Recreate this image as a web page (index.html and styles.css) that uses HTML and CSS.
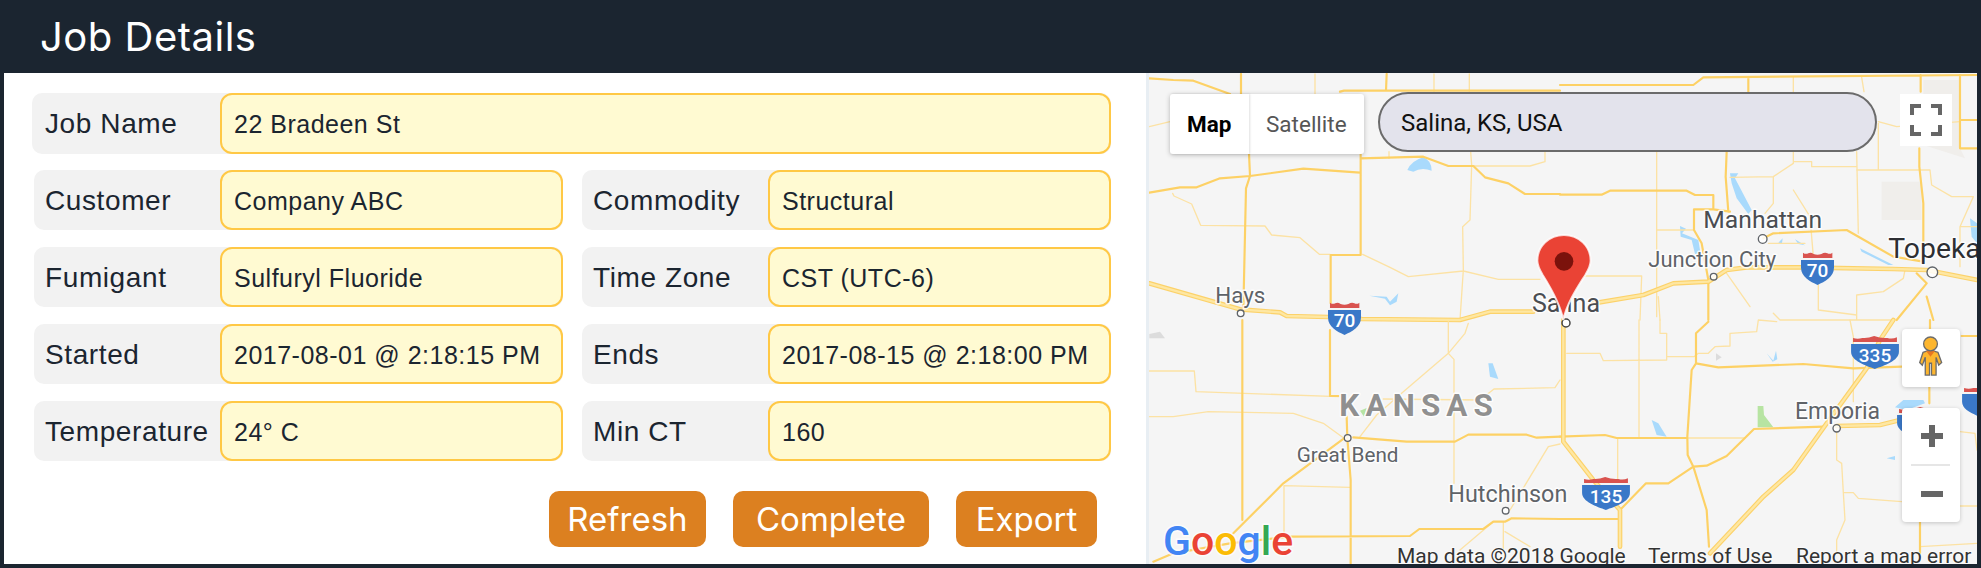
FILE: index.html
```html
<!DOCTYPE html>
<html lang="en">
<head>
<meta charset="utf-8">
<title>Job Details</title>
<link rel="stylesheet" href="styles.css">
</head>
<body>
<div class="app">
  <header class="topbar"><h1 class="title">Job Details</h1></header>
  <main class="content">
    <section class="panel">
      <div class="field field-wide"><span class="label">Job Name</span><span class="value">22 Bradeen St</span></div>
      <div class="grid">
        <div class="field"><span class="label">Customer</span><span class="value">Company ABC</span></div>
        <div class="field"><span class="label">Commodity</span><span class="value">Structural</span></div>
        <div class="field"><span class="label">Fumigant</span><span class="value">Sulfuryl Fluoride</span></div>
        <div class="field"><span class="label">Time Zone</span><span class="value">CST (UTC-6)</span></div>
        <div class="field"><span class="label">Started</span><span class="value">2017-08-01 @ 2:18:15 PM</span></div>
        <div class="field"><span class="label">Ends</span><span class="value">2017-08-15 @ 2:18:00 PM</span></div>
        <div class="field"><span class="label">Temperature</span><span class="value">24° C</span></div>
        <div class="field"><span class="label">Min CT</span><span class="value">160</span></div>
      </div>
      <div class="actions">
        <button class="btn">Refresh</button>
        <button class="btn">Complete</button>
        <button class="btn">Export</button>
      </div>
    </section>
    <section class="map">
      <svg class="map-canvas" viewBox="1149 73 828 491" xmlns="http://www.w3.org/2000/svg">
        <defs>
          <symbol id="sh2" viewBox="0 0 100 100">
            <path class="sh-red" d="M6 18 L6 2 Q14 8 22 4 Q30 0 38 6 Q50 10 62 6 Q72 0 80 4 Q88 8 95 2 L95 18 Z"/>
            <path class="sh-blue" d="M0 24 H100 V48 C100 76 72 90 50 100 C28 90 0 76 0 48 Z"/>
          </symbol>
          <symbol id="sh3" viewBox="0 0 145 100">
            <path class="sh-red" d="M6 18 L6 6 Q20 10 34 6 Q50 8 70 0 Q90 8 110 6 Q125 10 139 4 L139 18 Z"/>
            <path class="sh-blue" d="M0 24 H145 V48 C145 76 100 90 72 100 C45 90 0 76 0 48 Z"/>
          </symbol>
        </defs>
        <rect class="land" x="1149" y="73" width="828" height="491"/>

        <!-- north-west quarter -->
        <g transform="translate(1140 70) scale(.33333)">
          <path class="wet" d="M802 300 Q815 272 850 262 Q875 272 875 302 Q845 290 820 305 Z"/>
          <path class="wet" d="M688 677 L740 680 L750 695 L775 670 L770 695 L750 706 L735 686 Z"/>
          <path class="lo" d="M525 12 V72 M882 12 V65 M988 12 V65 M747 245 V265 M992 245 L995 285 L990 450 L968 470 L970 600 L960 750 M1000 288 L1170 288 L1215 275 V245 M98 370 L102 378 L155 402 L182 466 L375 468 L395 495 L480 503 L538 553 H570 M668 553 L750 592 L805 620 L970 603 L1075 628 L1200 628 M28 170 L90 155"/>
          <path class="md" d="M28 25 L100 30 L160 32 L270 72 M303 12 V72 M327 250 L330 318 L318 355 L310 720 M28 368 L120 352 L170 352 L240 325 L330 318 L490 296 L660 308 M662 252 V555 H572 V700 M662 265 L850 260 L925 288 H1000 L1035 322 L1105 340 L1155 372 H1260 M600 65 L612 62 H1260 M740 12 L738 62"/>
          <path class="hw-o" d="M28 640 L300 718 L420 727 L440 738 L565 741 L666 747 L960 750 L1050 725 L1180 725"/>
          <path class="hw-i" d="M28 640 L300 718 L420 727 L440 738 L565 741 L666 747 L960 750 L1050 725 L1180 725"/>
          <circle class="town" cx="302" cy="730" r="10"/>
          <text class="place" x="226" y="700" font-size="67">Hays</text>
        </g>

        <!-- north-east quarter -->
        <g transform="translate(1560 70) scale(.33333)">
          <path class="park" d="M1090 30 H1200 V235 L1215 265 L1090 225 Z"/>
          <path class="park" d="M965 335 H1085 V450 H965 Z"/>
          <path class="wet" d="M510 310 L535 310 L525 325 L575 420 L565 432 L530 385 L515 340 Z"/>
          <path class="wet" d="M360 468 L378 476 L366 490 L415 510 L422 552 L405 552 L395 510 L362 500 Z"/>
          <path class="wet" d="M655 518 L668 505 L666 520 Z M705 508 L735 526 L715 522 Z"/>
          <path class="wet" d="M900 535 L1000 585 L985 585 L905 545 Z M1230 445 L1251 460 V520 L1235 500 Z"/>
          <path class="lo" d="M290 245 V740 M290 480 H400 M700 22 V280 M700 275 H755 V290 H890 M890 245 L895 490 M905 22 L912 65 M955 160 V300 M955 155 L1010 170 L1200 155 M890 300 H1110 L1115 345 L1175 380 H1240 L1200 470 V590 M700 280 L640 320 L510 322 M640 320 V400 L615 430 M700 360 L750 440 L760 560 M1200 470 H1251 M0 618 H245 L240 750 M295 680 L300 750 M500 610 L570 710 M775 640 V720 L890 735 M890 750 V675 L970 665 L1030 625 L1035 600 M640 730 L660 750 H1000 M625 520 H735"/>
          <path class="md" d="M0 45 H400 L430 22 L1251 15 M565 22 V65 M1082 15 V65 M1200 15 V235 H1251 M1200 150 H1251 M0 374 H125 L150 362 H380 L405 375 H460 V418 H402 V480 L425 520 L445 630 V750 M460 418 L510 425 M500 245 L497 320 L505 425 M610 505 L640 490 L860 480 L1000 560 L1090 575 M1078 235 V290 L1090 400 V580 M1100 640 L1010 750 M1070 610 L1100 640 M1100 680 L1120 750"/>
          <path class="hw-o" d="M100 700 L250 675 L340 640 L445 635 L500 600 L560 592 H720 L1000 597 L1100 600 L1251 630"/>
          <path class="hw-i" d="M100 700 L250 675 L340 640 L445 635 L500 600 L560 592 H720 L1000 597 L1100 600 L1251 630"/>
          <circle class="town" cx="608" cy="507" r="13"/>
          <circle class="town" cx="461" cy="620" r="10"/>
          <circle class="town" cx="1117" cy="607" r="16"/>
          <text class="place place-dark" x="430" y="475" font-size="74">Manhattan</text>
          <text class="place" x="265" y="590" font-size="66">Junction City</text>
          <text class="place place-black" x="985" y="565" font-size="85">Topeka</text>
        </g>

        <!-- south-west quarter -->
        <g transform="translate(1140 320) scale(.33333)">
          <path class="dim" d="M28 42 L60 35 L75 55 H28 Z"/>
          <path class="wet" d="M1045 130 L1058 130 L1075 177 L1050 170 Z"/>
          <path class="grn" d="M660 272 L680 264 L672 290 Z"/>
          <path class="lo" d="M925 5 V100 L975 40 L985 10 M925 100 L790 215 L710 285 L660 350 M925 100 L942 118 V490 M28 153 H163 L168 215 L595 230 M730 237 L1020 240 L1062 207 L1245 203 L1260 180 M28 290 H100 L205 275 L460 280 L550 310 L612 355 M432 497 L630 502 M432 497 V640 M1225 380 L1260 372 M1225 380 L1110 570 M1060 605 L960 690 M1090 605 V690 M1095 635 L1170 680"/>
          <path class="md" d="M307 0 V600 M570 30 V228 H595 M612 355 L430 490 L280 640 M620 290 L622 355 L632 480 V730 M640 352 L800 365 H945 L985 344 H1160 L1190 353 L1260 350 M40 725 L100 700 L270 670 L450 650 L810 648 L838 627 H1030 L1060 605 H1095 L1115 595 L1260 597"/>
          <circle class="town" cx="623" cy="354" r="10"/>
          <circle class="town" cx="1097" cy="572" r="10"/>
          <text class="place" x="470" y="425" font-size="62">Great Bend</text>
          <text class="place" x="925" y="545" font-size="70">Hutchinson</text>
          <text class="state" x="598" y="288" font-size="94">KANSAS</text>
        </g>

        <!-- south-east quarter -->
        <g transform="translate(1560 320) scale(.33333)">
          <path class="wet" d="M275 300 L295 310 L320 350 L290 345 Z M620 100 L640 122 L648 92 L652 118 L638 125 Z M980 415 L1005 408 L1005 420 Z M1030 240 L1090 240 L1095 250 L1040 270 L1005 262 Z"/>
          <path class="dim" d="M468 100 L485 112 L468 122 Z"/>
          <path class="grn" d="M593 258 H610 L612 285 L640 322 H593 Z"/>
          <path class="lo" d="M237 0 V350 M300 0 V40 H320 V120 L130 122 L120 100 H20 M320 110 H402 L415 100 H445 L465 80 L510 78 V40 L590 35 L595 0 L650 5 M870 0 L880 50 V245 M385 354 H555 M173 354 V480 M830 335 V420 L845 430 L850 518 H880 L895 535 L1025 545 M850 518 L855 600 L830 660 V700 M1200 335 L1245 340 L1251 390 M1080 558 H1251 M1080 680 L1251 670"/>
          <path class="md" d="M445 5 L408 40 V130 L395 150 L382 350 L383 405 L400 440 L440 570 L447 680 M408 130 L475 142 L730 132 L880 145 L1025 140 M0 350 L135 345 L170 354 H380 M400 440 L440 437 L500 408 L582 327 L790 320 M400 440 L325 490 H258 L180 570 M0 597 H175 M1110 0 V30 M1108 200 V250 M1080 600 V700 M1205 48 H1251"/>
          <path class="hw-o" d="M10 0 V365 L100 480 L180 570 V680 M1000 0 L960 60 L920 145 L800 310 L700 450 L610 530 L450 700 M830 318 L960 315 L1020 300"/>
          <path class="hw-i" d="M10 0 V365 L100 480 L180 570 V680 M1000 0 L960 60 L920 145 L800 310 L700 450 L610 530 L450 700 M830 318 L960 315 L1020 300"/>
          <circle class="town" cx="830" cy="325" r="11"/>
          <text class="place" x="705" y="297" font-size="69">Emporia</text>
        </g>

        <!-- interstate shields -->
        <use href="#sh2" x="1328" y="302" width="33" height="33"/>
        <use href="#sh2" x="1801" y="252" width="33" height="33"/>
        <use href="#sh3" x="1582" y="477" width="48" height="33"/>
        <use href="#sh3" x="1851" y="336" width="48" height="33"/>
        <use href="#sh3" x="1897" y="407" width="48" height="33"/>
        <use href="#sh3" x="1962" y="386" width="48" height="33"/>
        <text class="shield" x="1344.5" y="327" font-size="19">70</text>
        <text class="shield" x="1817.5" y="277" font-size="19">70</text>
        <text class="shield" x="1606" y="502.5" font-size="19">135</text>
        <text class="shield" x="1875" y="361.5" font-size="19">335</text>

        <!-- Salina and the pin -->
        <circle class="town-page" cx="1566" cy="323" r="4"/>
        <text class="place-page" x="1532" y="312" font-size="25">Salina</text>
        <g transform="translate(1500 220) scale(.33333)">
          <path class="pin" d="M190 300 C180 250 150 200 128 165 C118 148 112 135 112 122 C112 78 148 45 192 45 C236 45 272 78 272 122 C272 135 266 148 256 165 C234 200 200 250 190 300 Z"/>
          <circle class="pin-dot" cx="192" cy="124" r="28"/>
        </g>

        <text class="logo" x="1163" y="555" font-size="41"><tspan class="g-b">G</tspan><tspan class="g-r">o</tspan><tspan class="g-y">o</tspan><tspan class="g-b">g</tspan><tspan class="g-g">l</tspan><tspan class="g-r">e</tspan></text>
        <text class="legal" x="1397" y="563" font-size="21">Map data ©2018 Google</text>
        <text class="legal" x="1648" y="563" font-size="21">Terms of Use</text>
        <text class="legal" x="1796" y="563" font-size="21">Report a map error</text>
      </svg>

      <div class="maptype">
        <span class="maptype-tab maptype-on">Map</span>
        <span class="maptype-tab">Satellite</span>
      </div>
      <div class="search">Salina, KS, USA</div>
      <div class="ctl ctl-full">
        <svg class="ctl-icon" viewBox="0 0 52 52"><path class="ctl-line" d="M12 21 V12 H21 M31 12 H40 V21 M40 31 V40 H31 M21 40 H12 V31"/></svg>
      </div>
      <div class="ctl ctl-peg">
        <svg class="ctl-icon" viewBox="66 27 177 174">
          <path class="peg" d="M130 97 L120 128 L128 136 L137 112 L137 166 L150 166 L150 130 L156 130 L156 166 L170 166 L170 112 L178 136 L187 128 L176 97 Q152 86 130 97 Z"/>
          <path class="peg-v" d="M139 92 L167 92 L153 110 Z"/>
          <circle class="peg" cx="153" cy="71" r="21"/>
        </svg>
      </div>
      <div class="ctl ctl-zoom">
        <svg class="ctl-icon" viewBox="0 0 58 114">
          <path class="zoom-mark" d="M19 28 H41 M30 17 V39 M19 86 H41"/>
          <path class="zoom-sep" d="M9 57 H48"/>
        </svg>
      </div>
    </section>
  </main>
</div>
</body>
</html>
```

FILE: styles.css
```css
* { box-sizing: border-box; }
html, body { margin: 0; padding: 0; height: 100%; }
body { background: #1b2530; color: #1b2530; font-family: "Liberation Sans", Arial, sans-serif; overflow: hidden; }

.app { display: flex; flex-direction: column; width: 1981px; height: 568px; }
.topbar { height: 73px; flex: none; display: flex; align-items: center; padding-left: 40px; background: #1b2530; }
.title { margin: 0; font: 400 40px/1 Inter, sans-serif; letter-spacing: .5px; color: #fff; }

.content { flex: none; display: flex; height: 491px; margin: 0 4px; }

.panel { flex: none; width: 1145px; padding: 20px 35px 0 28px; background: #fff; border-right: 3px solid #e8eef3; }
.field { display: flex; height: 60px; background: #f2f2f2; border-radius: 10px; }
.field-wide { height: 61px; margin-bottom: 16px; }
.field-wide .label { width: 188px; padding-left: 13px; }
.grid { display: grid; grid-template-columns: 529px 529px; column-gap: 19px; row-gap: 17px; margin-left: 2px; }
.label { flex: none; width: 186px; padding: 1px 0 0 11px; font-size: 28px; letter-spacing: .6px; line-height: 60px; white-space: nowrap; }
.value { flex: 1; min-width: 0; padding-left: 12px; background: #fffad2; border: 2px solid #ffc845; border-radius: 12px; font-size: 25px; letter-spacing: .5px; line-height: 58px; white-space: nowrap; }

.actions { display: grid; grid-template-columns: 157px 196px 141px; justify-content: end; gap: 27px; margin-top: 30px; padding-right: 14px; }
.btn { height: 56px; padding: 0; background: #dc8020; border: 0; border-radius: 10px; color: #fff; font: 400 33px/1 Inter, sans-serif; }

.map { position: relative; flex: 1; overflow: hidden; background: #f5f5f5; }
.map-canvas { display: block; width: 828px; height: 491px; }
.land { fill: #f5f5f5; }
.lo, .md, .hw-o, .hw-i { fill: none; stroke-linejoin: round; stroke-linecap: round; }
.lo { stroke: #fce2a4; stroke-width: 4; }
.md { stroke: #fdd165; stroke-width: 6.5; }
.hw-o { stroke: #fcd26a; stroke-width: 14; }
.hw-i { stroke: #fee7a2; stroke-width: 7; }
.wet { fill: #a9dafc; }
.grn { fill: #b7e4a2; }
.park { fill: #f0eeeb; }
.dim { fill: #dcdcdc; }
.town { fill: #fff; fill-opacity: .85; stroke: #5f6368; stroke-width: 4; }
.town-page { fill: #fff; stroke: #444; stroke-width: 1.5; }

.place, .place-page, .state { font-family: Roboto, sans-serif; paint-order: stroke; stroke: #fff; stroke-opacity: .85; stroke-linejoin: round; }
.place { fill: #5f6368; stroke-width: 9; }
.place-dark { fill: #4a4d52; }
.place-black { fill: #2d2f33; }
.place-page { fill: #4a4d52; stroke-width: 3; }
.state { fill: #909090; font-weight: 700; letter-spacing: 18.5px; stroke-width: 9; }
.shield { fill: #fff; font-family: Roboto, sans-serif; font-weight: 500; text-anchor: middle; }
.sh-red { fill: #d9534f; }
.sh-blue { fill: #3a78c8; }

.pin { fill: #ea4335; stroke: #fff; stroke-opacity: .8; stroke-width: 6; }
.pin-dot { fill: #7b120c; }

.logo { font-family: Roboto, sans-serif; font-weight: 500; paint-order: stroke; stroke: #fff; stroke-opacity: .7; stroke-width: 3; }
.g-b { fill: #4285f4; }
.g-r { fill: #ea4335; }
.g-y { fill: #fbbc05; }
.g-g { fill: #34a853; }
.legal { font-family: Roboto, sans-serif; fill: #333; paint-order: stroke; stroke: #fff; stroke-opacity: .6; stroke-width: 2; }

.maptype { position: absolute; left: 21px; top: 21px; display: flex; height: 60px; background: #fff; border-radius: 3px; box-shadow: 0 1px 5px rgba(0,0,0,.25); font: 400 22.5px/60px Roboto, sans-serif; color: #565656; }
.maptype-tab { padding: 0 17px; }
.maptype-on { width: 79px; padding: 0 17px; color: #000; font-weight: 700; box-shadow: 1px 0 2px rgba(0,0,0,.12); }
.search { position: absolute; left: 229px; top: 19px; width: 499px; height: 60px; padding-left: 21px; background: #e3e3ec; border: 2px solid #6b6b6b; border-radius: 30px; font: 400 24px/58px Roboto, sans-serif; color: #111; }
.ctl { position: absolute; background: #fff; }
.ctl-icon { display: block; width: 100%; height: 100%; }
.ctl-full { left: 751px; top: 21px; width: 52px; height: 52px; }
.ctl-line { fill: none; stroke: #666; stroke-width: 4; }
.ctl-peg { left: 753px; top: 256px; width: 58px; height: 58px; border-radius: 4px; box-shadow: 0 1px 4px rgba(0,0,0,.2); }
.peg { fill: #fdb62f; stroke: #6c6c6c; stroke-width: 4; }
.peg-v { fill: #e87722; }
.ctl-zoom { left: 753px; top: 335px; width: 58px; height: 114px; border-radius: 4px; box-shadow: 0 1px 4px rgba(0,0,0,.2); }
.zoom-mark { fill: none; stroke: #666; stroke-width: 6; }
.zoom-sep { stroke: #e6e6e6; stroke-width: 2; }
```
